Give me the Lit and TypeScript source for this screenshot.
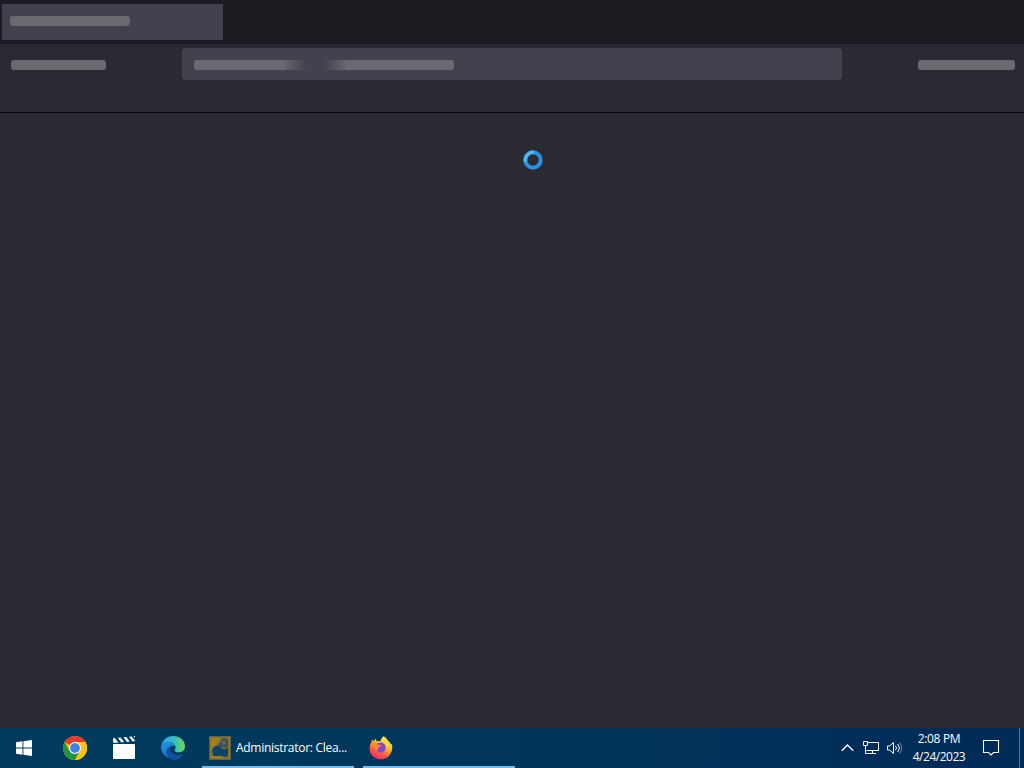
import { LitElement, html, css } from 'lit';
import { customElement, property } from 'lit/decorators.js';

/**
 * Browser window still loading: placeholder bars instead of tabs and buttons
 */
@customElement('browser-skeleton')
export class BrowserSkeleton extends LitElement {
    static styles = css`
        :host {
            display: flex;
            flex-direction: column;
            flex: 1;
            min-height: 0;
            background: #2b2a32;
        }
        .tabs {
            box-sizing: border-box;
            height: 44px;
            padding: 4px 2px;
            background: #1c1b21;
        }
        .tab {
            box-sizing: border-box;
            width: 221px;
            height: 36px;
            padding: 12px 8px;
            background: #42404c;
        }
        .bar {
            height: 10px;
            border-radius: 3px;
            background: #6a696f;
        }
        .tab .bar {
            width: 120px;
            height: 10px;
        }
        .toolbar {
            box-sizing: border-box;
            display: flex;
            align-items: flex-start;
            justify-content: space-between;
            height: 69px;
            padding: 4px 9px 0 11px;
            border-bottom: 1px solid #08080c;
        }
        .side {
            width: 95px;
            margin-top: 12px;
        }
        .side.end {
            width: 97px;
        }
        .url {
            box-sizing: border-box;
            display: flex;
            width: 660px;
            height: 32px;
            padding: 12px;
            border-radius: 4px;
            background: #43414d;
        }
        .url .bar {
            width: 260px;
            background: linear-gradient(90deg, #6a696f 34%, #43414d 43%, #43414d 50%, #6a696f 59%);
        }
    `;

    render() {
        return html`
            <div class="tabs"><div class="tab"><div class="bar"></div></div></div>
            <div class="toolbar">
                <div class="bar side"></div>
                <div class="url"><div class="bar"></div></div>
                <div class="bar side end"></div>
            </div>
        `;
    }
}

@customElement('task-button')
export class TaskButton extends LitElement {
    static styles = css`
        :host {
            box-sizing: border-box;
            display: flex;
            align-items: center;
            gap: 4px;
            width: 152px;
            height: 40px;
            padding-left: 6px;
            border-bottom: 2px solid #76b9ed;
            padding-top: 2px;
        }
        .label {
            font: 12px/16px "Open Sans", "Noto Sans", sans-serif;
            letter-spacing: -0.28px;
            color: #fff;
            white-space: nowrap;
        }
    `;

    @property() label = '';

    render() {
        return html`<slot></slot><span class="label">${this.label}</span>`;
    }
}

@customElement('task-bar')
export class TaskBar extends LitElement {
    static styles = css`
        :host {
            display: flex;
            justify-content: space-between;
            height: 40px;
            background: linear-gradient(90deg, #003b5d, #00365b 50%, #002a58);
            color: #fff;
        }
        svg {
            display: block;
            flex: none;
        }
        .apps, .tray {
            display: flex;
        }
        .pinned {
            display: flex;
            align-items: center;
            justify-content: center;
            width: 49px;
        }
        .pinned.start {
            width: 48px;
            padding-right: 2px;
        }
        task-button {
            margin-left: 5px;
        }
        task-button + task-button {
            margin-left: 9px;
        }
        .tray {
            align-items: center;
        }
        .clock {
            width: 64px;
            margin-left: 4px;
            font: 12px/18px "Open Sans", "Noto Sans", sans-serif;
            letter-spacing: -0.35px;
            text-align: center;
            white-space: nowrap;
        }
        .clock div + div {
            letter-spacing: -0.48px;
        }
        .notices {
            margin-left: 11px;
        }
        .desktop {
            box-sizing: border-box;
            width: 5px;
            height: 40px;
            margin-left: 19px;
            border-left: 1px solid #4b7295;
        }
    `;

    render() {
        return html`
            <div class="apps">
                <div class="pinned start">${this._windows()}</div>
                <div class="pinned">${this._chrome()}</div>
                <div class="pinned">${this._clapper()}</div>
                <div class="pinned">${this._edge()}</div>
                <task-button label="Administrator: Clea...">${this._cleaner()}</task-button>
                <task-button>${this._firefox()}</task-button>
            </div>
            <div class="tray">
                ${this._trayIcons()}
                <div class="clock"><div>2:08 PM</div><div>4/24/2023</div></div>
                ${this._notices()}
                <div class="desktop"></div>
            </div>
        `;
    }

    _windows() {
        return html`
            <svg width="16" height="16" viewBox="0 0 16 16" fill="#fff">
                <path d="M0 2.2 6.5 1.3V7.5H0ZM7.4 1.2 16 0V7.5H7.4ZM0 8.4H6.5V14.7L0 13.8ZM7.4 8.4H16V16L7.4 14.8Z"/>
            </svg>`;
    }

    _chrome() {
        return html`
            <svg width="24" height="24" viewBox="0 0 24 24">
                <circle cx="12" cy="12" r="12" fill="#fbc116"/>
                <path d="M12 12 1.6 6A12 12 0 0 1 22.4 6H12Z" fill="#e33b2e"/>
                <path d="M1.6 6A12 12 0 0 0 12 24L17.2 15 12 12 6.8 15Z" fill="#229342"/>
                <path d="M12 6H22.4A12 12 0 0 1 12 24L17.2 15Z" fill="#fbc116"/>
                <circle cx="12" cy="12" r="6" fill="#fff"/>
                <circle cx="12" cy="12" r="4.9" fill="#3f83e4"/>
            </svg>`;
    }

    _clapper() {
        return html`
            <svg width="22" height="24" viewBox="0 0 22 24" fill="#fff">
                <rect y="8" width="22" height="15" rx="1"/>
                <path d="M0 2.5 1.8 2.1 5.4 6.6 1 7 0 6ZM4.8 1.9 7.6 1.5 11.2 6 8.4 6.4ZM10.4 1.3 13.2 1 16.8 5.5 14 5.9ZM16 .8 18.6.4 22 4.6V5L19.6 5.4ZM20.6.2 22 0V2Z"/>
            </svg>`;
    }

    _edge() {
        return html`
            <svg width="24" height="24" viewBox="0 0 24 24">
                <defs>
                    <linearGradient id="wave" x1="0" y1=".5" x2="1" y2=".5">
                        <stop offset="0" stop-color="#279fe2"/>
                        <stop offset=".55" stop-color="#35bfc4"/>
                        <stop offset="1" stop-color="#6bd75b"/>
                    </linearGradient>
                    <linearGradient id="sea" x1="0" y1="0" x2=".6" y2="1">
                        <stop offset="0" stop-color="#2492df"/>
                        <stop offset="1" stop-color="#1870c6"/>
                    </linearGradient>
                </defs>
                <path d="M0 11C.8 4.5 5.7 0 12 0c7 0 12 4.8 12 10.2 0 3.9-2.8 6.1-6 6.1-2.9 0-4.5-1-4.5-2.1 0-.7 1.1-1.2 1.1-2.8C14.6 8.6 11.5 6 7.4 6 3.5 6 1 8.2 0 11Z" fill="url(#wave)"/>
                <path d="M0 12C.3 8.2 3.2 6 7.4 6c4.2 0 7.2 2.6 7.2 5.1-1-1.2-2.2-1.7-3.5-1.3-2.7 1-3.5 3.5-2.8 6.2.9 3.4 3.9 6.2 8.2 5.7A12 12 0 0 1 0 12Z" fill="url(#sea)"/>
                <path d="M10.2 10.2C6.7 11.5 5 14 5.7 17.2c.7 3.5 3.6 6.1 7.2 6.7 4-.2 7.4-2.3 9.3-5.5.3-.6-.2-.8-.7-.5-5.3 2.6-11.3.2-12.1-3.8-.3-1.5 0-2.9.8-3.9Z" fill="#104f9b"/>
            </svg>`;
    }

    _cleaner() {
        return html`
            <svg width="24" height="24" viewBox="0 0 24 24">
                <rect x="1" y="0" width="22" height="24" fill="#8b7124"/>
                <rect x="1.5" y=".5" width="21" height="23" fill="none" stroke="#5d634c"/>
                <path d="M3 2H13L9 7 4 12 3 17Z" fill="#a1801c"/>
                <path d="M12 6Q13 2 17 2L20 4V10Q17 13 14 11L10 10Z" fill="#2f526b"/>
                <path d="M4 14Q7 9 11 10L15 13Q18 14 20 11V20Q16 22 12 20L5 20Z" fill="#0e4468"/>
                <path d="M13 5 17 4 18 8 14 9Z" fill="#676647"/>
                <path d="M3 19Q8 22 13 20L17 22H3Z" fill="#a08125"/>
            </svg>`;
    }

    _firefox() {
        return html`
            <svg width="24" height="24" viewBox="0 0 24 24">
                <defs>
                    <linearGradient id="fire" x1=".8" y1="0" x2=".3" y2="1">
                        <stop offset="0" stop-color="#fff44f"/>
                        <stop offset=".4" stop-color="#ffbd30"/>
                        <stop offset=".7" stop-color="#ff603b"/>
                        <stop offset="1" stop-color="#ed2479"/>
                    </linearGradient>
                </defs>
                <path d="M14.7.3C17 1.6 18.4 3.2 19.1 5.1c1.4.6 2.5 2.1 2.8 3.4L23 8c1.5 8-3.1 15.3-11.2 15.3C5.4 23.3.6 18.5.6 12.4c0-3 .8-5 2-6.5L2.8 3.5 5 5.2 6.4 2.6 8 5.4C9.3 4.8 10.4 4.8 11.6 5 11.8 3 12.9 1.4 14.7.3Z" fill="url(#fire)"/>
                <path d="M8 7.4 12 6.3c2.8.4 4.7 2.7 4.7 5.4 0 3-2.2 4.8-4.8 4.8-2.9 0-4.7-1.8-4.7-4.3 0-2 .3-3.6.8-4.8Z" fill="#8548c8"/>
                <path d="M2.8 7.2C5 6.3 7.4 7 8.1 8.5l4.1.4c-.4 1.5-2.1 1.6-2.9 2.6-.5 1-.3 2.3-1.2 2.9C5.5 14 4.2 10.4 2.8 7.2Z" fill="#ff8a30"/>
                <path d="M12.5 4.4 15 1.2C18 3 19.5 7 18.8 12.6c-.8-2.2-1.6-3.6-3.2-4.9-1.4-.8-2.7-1.7-3.1-3.3Z" fill="#ffdc3d"/>
            </svg>`;
    }

    _trayIcons() {
        return html`
            <svg width="62" height="16" viewBox="0 0 62 16" fill="none" stroke="#fff">
                <path d="M.7 10.7 6.5 5 12.3 10.7" stroke-width="1.3"/>
                <path d="M26.5 2.5H37.5V10.5H25.5M31.5 10.5V13.5M28 13.5H35M22.5 1.5H26.5V5.5H22.5ZM24.5 5.5V13.5H28"/>
                <path d="M46.5 6V10H48.5L52.5 13.5V2.5L48.5 6Z"/>
                <path d="M54.5 5.8Q56.5 8 54.5 10.2M56.5 4Q60 8 56.5 12"/>
                <path d="M58.5 2.4Q63 8 58.5 13.6" stroke="#6c8aa5"/>
            </svg>`;
    }

    _notices() {
        return html`
            <svg class="notices" width="18" height="18" viewBox="0 0 18 18" fill="none" stroke="#fff" stroke-width="1.1">
                <path d="M1.5 1.5H16.5V13.5H11.5L9 16 6.5 13.5H1.5Z"/>
            </svg>`;
    }
}

@customElement('app-root')
export class AppRoot extends LitElement {
    static styles = css`
        :host {
            position: relative;
            display: flex;
            flex-direction: column;
            width: 1024px;
            height: 768px;
            overflow: hidden;
        }
        .busy {
            position: absolute;
            left: 523px;
            top: 150px;
        }
    `;

    render() {
        return html`
            <browser-skeleton></browser-skeleton>
            <task-bar></task-bar>
            <svg class="busy" width="20" height="20" viewBox="0 0 20 20" fill="none">
                <circle cx="10" cy="10" r="7.7" stroke="#2b91e4" stroke-width="4"/>
                <path d="M2.5 11.8A7.7 7.7 0 0 1 11 2.4" stroke="#4bb5f0" stroke-width="3.6"/>
            </svg>
        `;
    }
}
